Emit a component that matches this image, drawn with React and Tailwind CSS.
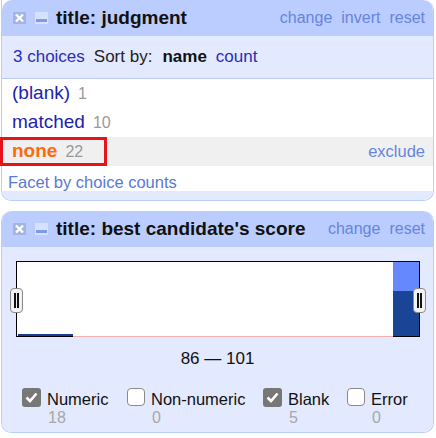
import React from "react";

const font = { fontFamily: '"Liberation Sans", Arial, sans-serif' };

// small header icons (close / minimize)
const CloseIcon = () => (
  <svg width="13" height="12" viewBox="0 0 13 12">
    <rect x="0" y="0" width="13" height="12" fill="#a3b4e4" />
    <path d="M3 2.5 L10 9.5 M10 2.5 L3 9.5" stroke="#ffffff" strokeWidth="2.4" />
  </svg>
);

const MinusIcon = () => (
  <svg width="13" height="12" viewBox="0 0 13 12">
    <rect x="0" y="0" width="13" height="12" fill="#d6e0ff" />
    <rect x="1" y="7" width="11" height="3" fill="#7f9ae6" />
  </svg>
);

const PanelHeader = ({ title, links }) => (
  <div className="flex items-center h-[36px] bg-[#bbccff] rounded-t-[10px] pl-[11px] pr-[8px]">
    <CloseIcon />
    <div className="ml-[9px]">
      <MinusIcon />
    </div>
    <span className="ml-[8px] text-[19px] font-bold text-[#111]">{title}</span>
    <div className="ml-auto flex gap-[9px] text-[16px] text-[#6686dd]">
      {links.map((l) => (
        <span key={l}>{l}</span>
      ))}
    </div>
  </div>
);

const Handle = ({ className }) => (
  <div
    className={
      "absolute top-[26px] w-[13px] h-[25px] rounded-[4px] border border-[#8a8a8a] bg-[#f2f2f2] flex items-center justify-center gap-[1px] " +
      className
    }
  >
    <div className="w-[2px] h-[15px] bg-[#111]" />
    <div className="w-[2px] h-[15px] bg-[#111]" />
  </div>
);

const Check = ({ checked, label, count }) => (
  <div className="flex items-start">
    {checked ? (
      <div className="mt-[1px] w-[19px] h-[19px] rounded-[3px] bg-[#777] flex items-center justify-center">
        <svg width="13" height="11" viewBox="0 0 13 11">
          <path d="M1.5 5.5 L5 9 L11.5 1.5" stroke="#fff" strokeWidth="2.6" fill="none" />
        </svg>
      </div>
    ) : (
      <div className="mt-[1px] w-[18px] h-[18px] rounded-[4px] border border-[#8a8a8a] bg-white" />
    )}
    <div className="ml-[6px] flex flex-col">
      <span className="text-[16.5px] leading-[19px] text-[#111] mt-[3px]">{label}</span>
      <span className="text-[16px] leading-[17px] text-[#a8a8a8] ml-[1px]">{count}</span>
    </div>
  </div>
);

export default function App() {
  const rows = [
    { name: "(blank)", count: 1 },
    { name: "matched", count: 10 },
  ];

  return (
    <div className="w-[436px] h-[438px] bg-white relative" style={font}>
      {/* text facet */}
      <div className="ml-[1px] w-[433px] border border-t-0 border-[#bbccff] rounded-[10px] rounded-tl-none overflow-hidden">
        <PanelHeader title="title: judgment" links={["change", "invert", "reset"]} />
        <div className="h-[43px] bg-[#e3e9ff] border-b border-[#bbccff] flex items-center pl-[11px] text-[17px]">
          <span className="text-[#2b2bb8]">3 choices</span>
          <span className="ml-[9px] text-[#222]">Sort by:</span>
          <span className="ml-[10px] font-bold text-[#111]">name</span>
          <span className="ml-[9px] text-[#2b2bb8]">count</span>
        </div>
        <div className="bg-white">
          {rows.map((r) => (
            <div key={r.name} className="h-[29px] flex items-center pl-[10px]">
              <span className="text-[19px] text-[#2222b0]">{r.name}</span>
              <span className="ml-[8px] text-[16px] text-[#999]">{r.count}</span>
            </div>
          ))}
          <div className="h-[29px] flex items-center pl-[10px] pr-[8px] bg-[#f0f0f0]">
            <span className="text-[19px] font-bold text-[#ff6a0c]">none</span>
            <span className="ml-[8px] text-[16px] text-[#999]">22</span>
            <span className="ml-auto text-[16.5px] text-[#6686dd]">exclude</span>
          </div>
          <div className="h-[25px] pt-[7px] pl-[6px] text-[16.5px] leading-[18px] text-[#5a78d6]">
            Facet by choice counts
          </div>
        </div>
        <div className="h-[9px] bg-[#e3e9ff]" />
      </div>

      {/* annotation box */}
      <div className="absolute left-0 top-[137px] w-[107px] h-[29px] border-[3px] border-[#e5141c]" />

      {/* range facet */}
      <div className="mt-[10px] ml-[1px] w-[433px] border border-t-0 border-[#bbccff] rounded-[10px] overflow-hidden">
        <PanelHeader title="title: best candidate's score" links={["change", "reset"]} />
        <div className="bg-[#e3e9ff] h-[185px] pt-[14px]">
          <div className="relative ml-[14px] w-[404px] h-[76px] border border-black bg-white">
            <div className="absolute right-0 top-0 w-[26px] h-[29px] bg-[#6688ff]" />
            <div className="absolute right-0 top-[29px] w-[26px] bottom-0 bg-[#1a4496]" />
            <div className="absolute left-[1px] bottom-0 w-[55px] h-[2px] bg-[#1a3d8f]" />
            <div className="absolute left-[56px] right-[26px] bottom-[-1px] h-[1px] bg-[#f3b0b0]" />
            <Handle className="left-[-7px]" />
            <Handle className="right-[-7px]" />
          </div>
          <div className="mt-[9px] text-center text-[17px] text-[#111]">86 — 101</div>
          <div className="mt-[15px] flex pl-[20px]">
            <div className="w-[105px]">
              <Check checked label="Numeric" count="18" />
            </div>
            <div className="w-[136px]">
              <Check label="Non-numeric" count="0" />
            </div>
            <div className="w-[84px]">
              <Check checked label="Blank" count="5" />
            </div>
            <div>
              <Check label="Error" count="0" />
            </div>
          </div>
        </div>
      </div>
    </div>
  );
}
